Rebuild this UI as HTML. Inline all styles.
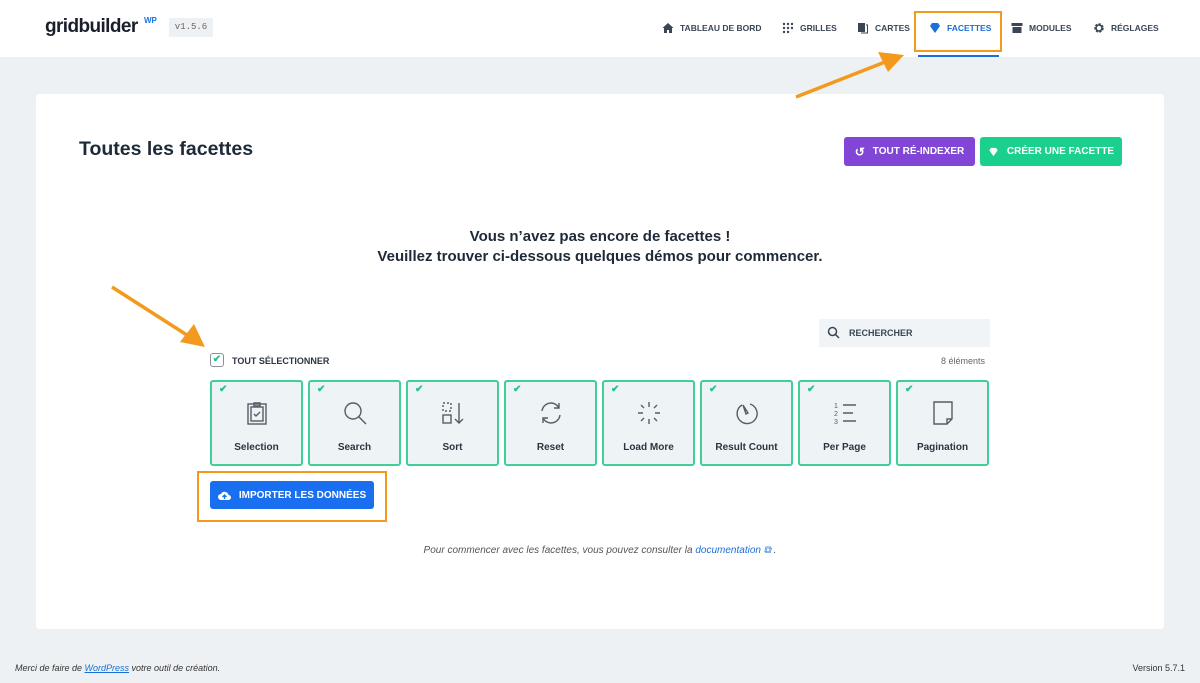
<!DOCTYPE html>
<html><head><meta charset="utf-8"><style>
*{box-sizing:border-box;margin:0;padding:0}
body{width:1200px;height:683px;background:#eef1f4;font-family:"Liberation Sans",sans-serif;position:relative;overflow:hidden;color:#1e2a38}
.hdr{position:absolute;left:0;top:0;width:1200px;height:57px;background:#fff}
.logo{position:absolute;left:45px;top:16px;font-size:19px;font-weight:bold;letter-spacing:-0.6px;color:#1a1f2b}
.logo sup{font-size:8px;color:#1a73e8;position:absolute;left:99px;top:0px;letter-spacing:0}
.ver{position:absolute;left:169px;top:18px;width:44px;height:19px;background:#eef1f4;font-family:"Liberation Mono",monospace;font-size:9px;color:#666;text-align:center;line-height:19px}
.nav{position:absolute;top:22px;font-size:8.5px;font-weight:bold;color:#3a4654;display:flex;align-items:center;gap:6px}
.nav svg{width:12px;height:12px}
.card{position:absolute;left:36px;top:94px;width:1128px;height:535px;background:#fff;border-radius:3px}
h1{position:absolute;left:79px;top:138px;font-size:19.5px;font-weight:bold;color:#1e2a38}
.btn{position:absolute;height:29px;border-radius:3px;color:#fff;font-size:10px;font-weight:bold;display:flex;align-items:center;justify-content:center;gap:8px}
.msg{position:absolute;left:0;width:1200px;text-align:center;font-size:15px;font-weight:bold;color:#1e2a38}
.tile{position:absolute;top:380px;width:93px;height:86px;border:2px solid #3fcf97;border-radius:3px;background:#eef3f5}
.tile .ck{position:absolute;left:7px;top:2px;color:#27c18a;font-size:10px;font-weight:bold}
.tile .lb{position:absolute;left:0;right:0;top:60px;text-align:center;font-size:10px;font-weight:bold;color:#2b3440}
.tile svg{position:absolute;left:32px;top:18px;width:26px;height:26px;fill:none;stroke:#555d66;stroke-width:1.4}
</style></head><body>
<div class="hdr">
<div class="logo">gridbuilder<sup>WP</sup></div>
<div class="ver">v1.5.6</div>
<div class="nav" style="left:662px"><svg viewBox="0 0 12 12"><path d="M6 1L0.5 6H2v5h3V8h2v3h3V6h1.5z" fill="#3a4654"/></svg>TABLEAU DE BORD</div>
<div class="nav" style="left:782px"><svg viewBox="0 0 12 12" fill="#3a4654"><circle cx="2" cy="2" r="1.2"/><circle cx="6" cy="2" r="1.2"/><circle cx="10" cy="2" r="1.2"/><circle cx="2" cy="6" r="1.2"/><circle cx="6" cy="6" r="1.2"/><circle cx="10" cy="6" r="1.2"/><circle cx="2" cy="10" r="1.2"/><circle cx="6" cy="10" r="1.2"/></svg>GRILLES</div>
<div class="nav" style="left:857px"><svg viewBox="0 0 12 12"><rect x="1" y="1" width="7" height="9" fill="#3a4654"/><path d="M9 3h1.5v8H4" stroke="#3a4654" fill="none"/></svg>CARTES</div>
<div class="nav" style="left:929px;color:#1a6fd8"><svg viewBox="0 0 12 12"><path d="M1 4l2-3h6l2 3-5 7z" fill="#1a6fd8"/></svg>FACETTES</div>
<div class="nav" style="left:1011px"><svg viewBox="0 0 12 12" fill="#3a4654"><rect x="0.5" y="1" width="11" height="3"/><rect x="1.5" y="5" width="9" height="6"/></svg>MODULES</div>
<div class="nav" style="left:1093px"><svg viewBox="0 0 12 12"><circle cx="6" cy="6" r="3.5" fill="none" stroke="#3a4654" stroke-width="2.5" stroke-dasharray="2 1.2"/><circle cx="6" cy="6" r="3" fill="none" stroke="#3a4654" stroke-width="1.5"/></svg>RÉGLAGES</div>
<div style="position:absolute;left:914px;top:11px;width:88px;height:41px;border:2px solid #f39a1e"></div>
<div style="position:absolute;left:918px;top:55px;width:81px;height:2px;background:#1a6fd8"></div>
</div>
<div class="card"></div>
<h1>Toutes les facettes</h1>
<div class="btn" style="left:844px;top:137px;width:131px;background:#8146d6"><span style="font-size:12px">↺</span>TOUT RÉ-INDEXER</div>
<div class="btn" style="left:980px;top:137px;width:142px;background:#1bd08c"><svg width="11" height="10" viewBox="0 0 12 12"><path d="M1 4l2-3h6l2 3-5 7z" fill="#fff"/></svg>CRÉER UNE FACETTE</div>
<div class="msg" style="top:228px">Vous n’avez pas encore de facettes !</div>
<div class="msg" style="top:248px">Veuillez trouver ci-dessous quelques démos pour commencer.</div>
<div style="position:absolute;left:819px;top:319px;width:171px;height:28px;background:#f1f4f6;font-size:9px;font-weight:bold;color:#3a4654;line-height:28px;padding-left:30px">RECHERCHER</div>
<svg style="position:absolute;left:827px;top:326px" width="13" height="13" viewBox="0 0 13 13"><circle cx="5.5" cy="5.5" r="4" fill="none" stroke="#3a4654" stroke-width="1.5"/><path d="M8.5 8.5l3.5 3.5" stroke="#3a4654" stroke-width="1.5"/></svg>
<div style="position:absolute;left:210px;top:353px;width:14px;height:14px;border:1.5px solid #8a9199;border-radius:3px;color:#27c18a;font-size:10px;font-weight:bold;text-align:center;line-height:12px">✔</div>
<div style="position:absolute;left:232px;top:356px;font-size:9px;font-weight:bold;color:#2b3440">TOUT SÉLECTIONNER</div>
<div style="position:absolute;left:941px;top:356px;font-size:9px;color:#666">8 éléments</div>

<div class="tile" style="left:210px"><span class="ck">✔</span><svg viewBox="0 0 26 26"><rect x="4" y="4" width="18" height="20"/><rect x="7" y="7" width="12" height="14"/><path d="M10 3h6v3h-6z M10 14l2 2 4-4"/></svg><div class="lb">Selection</div></div>
<div class="tile" style="left:308px"><span class="ck">✔</span><svg viewBox="0 0 26 26"><circle cx="11" cy="11" r="8"/><path d="M17 17l7 7"/></svg><div class="lb">Search</div></div>
<div class="tile" style="left:406px"><span class="ck">✔</span><svg viewBox="0 0 26 26"><rect x="3" y="3" width="8" height="8" stroke-dasharray="2 2"/><rect x="3" y="15" width="8" height="8"/><path d="M19 3v20M15 19l4 4 4-4"/></svg><div class="lb">Sort</div></div>
<div class="tile" style="left:504px"><span class="ck">✔</span><svg viewBox="0 0 26 26"><path d="M4 11A9 9 0 0 1 21 8M22 15A9 9 0 0 1 5 18M21 3v5h-5M5 23v-5h5"/></svg><div class="lb">Reset</div></div>
<div class="tile" style="left:602px"><span class="ck">✔</span><svg viewBox="0 0 26 26" stroke-width="1"><path d="M13 2v5M13 19v5M2 13h5M19 13h5M5 5l3 3M18 18l3 3M21 5l-3 3M5 21l3-3"/></svg><div class="lb">Load More</div></div>
<div class="tile" style="left:700px"><span class="ck">✔</span><svg viewBox="0 0 26 26"><path d="M8 5A10 10 0 1 0 16 4"/><path d="M9 5l5 8-2 1z"/></svg><div class="lb">Result Count</div></div>
<div class="tile" style="left:798px"><span class="ck">✔</span><svg viewBox="0 0 26 26"><path d="M11 5h13M11 13h10M11 21h13"/><text x="2" y="8" font-size="7" fill="#555d66" stroke="none">1</text><text x="2" y="16" font-size="7" fill="#555d66" stroke="none">2</text><text x="2" y="24" font-size="7" fill="#555d66" stroke="none">3</text></svg><div class="lb">Per Page</div></div>
<div class="tile" style="left:896px"><span class="ck">✔</span><svg viewBox="0 0 26 26"><path d="M4 2h18v17l-5 5H4z M22 19h-5v5"/></svg><div class="lb">Pagination</div></div>

<div style="position:absolute;left:197px;top:471px;width:190px;height:51px;border:2px solid #f39a1e"></div>
<div class="btn" style="left:210px;top:481px;width:164px;height:28px;background:#1a6ff0"><svg width="13" height="11" viewBox="0 0 13 11"><path d="M3 10a3 3 0 0 1 0-6 4 4 0 0 1 7.5 1 2.5 2.5 0 0 1 0 5z" fill="#fff"/><path d="M6.5 9V5M4.5 7l2-2 2 2" stroke="#1a6ff0" stroke-width="1.3" fill="none"/></svg>IMPORTER LES DONNÉES</div>

<div style="position:absolute;left:0;width:1200px;top:545px;text-align:center;font-size:10px;font-style:italic;color:#555">Pour commencer avec les facettes, vous pouvez consulter la <span style="color:#1a6fd8">documentation ⧉</span> .</div>
<div style="position:absolute;left:15px;top:663px;font-size:9px;font-style:italic;color:#333">Merci de faire de <span style="color:#1a6fd8;text-decoration:underline">WordPress</span> votre outil de création.</div>
<div style="position:absolute;right:15px;top:663px;font-size:9px;color:#333">Version 5.7.1</div>

<svg style="position:absolute;left:0;top:0" width="1200" height="683">
<path d="M796 97L885 62" stroke="#f39a1e" stroke-width="3.5"/><path d="M904 55L878 52 888 72z" fill="#f39a1e"/>
<path d="M112 287L190 337" stroke="#f39a1e" stroke-width="3.5"/><path d="M205 347L180 342 194 324z" fill="#f39a1e"/>
</svg>
</body></html>
